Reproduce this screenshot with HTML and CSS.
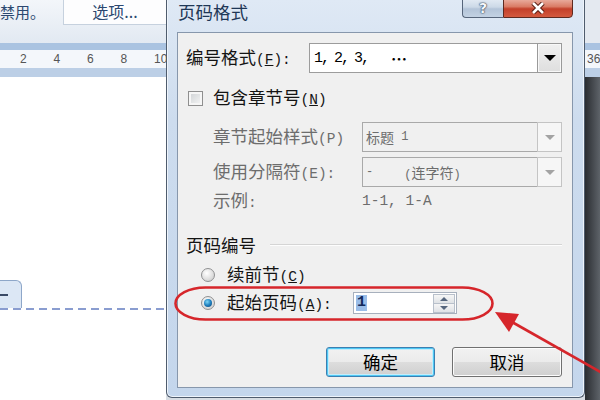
FILE: index.html
```html
<!DOCTYPE html>
<html lang="zh-CN">
<head>
<meta charset="utf-8">
<title>页码格式</title>
<link rel="stylesheet" href="styles.css">
</head>
<body>
<div class="screen">
  <div class="doc">
    <div class="ribbon">
      <span class="ribbon-note">禁用。</span>
      <span class="ribbon-tab">选项...</span>
    </div>
    <div class="ruler">
      <span>2</span><span>4</span><span>6</span><span>8</span><span>10</span>
    </div>
    <div class="page">
      <div class="hf-tab"><span class="hf-dash"></span></div>
      <div class="hf-line"></div>
    </div>
  </div>

  <div class="dialog">
    <div class="titlebar">
      <span class="title">页码格式</span>
      <div class="caption">
        <span class="cap-btn cap-help">?</span>
        <span class="cap-btn cap-close">
          <svg width="16" height="12" viewBox="0 0 16 12"><path d="M3 1 L13 11 M13 1 L3 11" stroke="#5a1d12" stroke-width="4.6"/><path d="M3 1 L13 11 M13 1 L3 11" stroke="#ffffff" stroke-width="2.6"/></svg>
        </span>
      </div>
    </div>

    <div class="client">
      <div class="row row-format">
        <span class="label label-format">编号格式<span class="a">(<u>F</u>):</span></span>
        <div class="combo">
          <span class="combo-text"><span class="num">1,</span><span class="num">2,</span><span class="num">3,</span><span class="ellipsis">…</span></span>
          <span class="combo-btn"><span class="tri"></span></span>
        </div>
      </div>

      <div class="row row-check">
        <span class="checkbox"></span>
        <span class="label">包含章节号<span class="a">(<u>N</u>)</span></span>
      </div>

      <div class="row row-sub row-sub1">
        <span class="label label-sub disabled">章节起始样式<span class="a">(P)</span></span>
        <div class="combo combo-disabled">
          <span class="combo-text">标题<span class="a-sm"> 1</span></span>
          <span class="combo-btn"><span class="tri"></span></span>
        </div>
      </div>

      <div class="row row-sub row-sub2">
        <span class="label label-sub disabled">使用分隔符<span class="a">(E):</span></span>
        <div class="combo combo-disabled">
          <span class="combo-text"><span class="a-sm">-</span><span class="sep-name"><span class="a-sm">(</span>连字符<span class="a-sm">)</span></span></span>
          <span class="combo-btn"><span class="tri"></span></span>
        </div>
      </div>

      <div class="row row-example">
        <span class="label label-sub disabled">示例<span class="a">:</span></span>
        <span class="example disabled">1-1, 1-A</span>
      </div>

      <div class="row group-head">
        <span class="label">页码编号</span>
        <span class="group-line"></span>
      </div>

      <div class="row row-radio radio1">
        <span class="radio"></span>
        <span class="label">续前节<span class="a">(<u>C</u>)</span></span>
      </div>

      <div class="row row-radio radio2">
        <span class="radio checked"><span class="radio-dot"></span></span>
        <span class="label label-start">起始页码<span class="a">(<u>A</u>):</span></span>
        <div class="spin">
          <span class="spin-val">1</span>
          <span class="spin-btns">
            <span class="spin-btn"><span class="tri-up"></span></span>
            <span class="spin-btn"><span class="tri-down"></span></span>
          </span>
        </div>
      </div>

      <div class="row buttons">
        <span class="btn btn-default">确定</span>
        <span class="btn">取消</span>
      </div>
    </div>
  </div>

  <div class="edge">
    <div class="edge-top"></div>
    <div class="edge-ruler">36</div>
    <div class="edge-shadow"></div>
  </div>
</div>

<svg class="annot" width="600" height="400" viewBox="0 0 600 400">
  <rect x="175.5" y="287.5" width="317" height="32" rx="30" ry="16" fill="none" stroke="#d6262b" stroke-width="2.6"/>
  <line x1="512" y1="322" x2="604" y2="374" stroke="#d6262b" stroke-width="2.6"/>
  <polygon points="495,312 519,314 509,332" fill="#d6262b"/>
</svg>
</body>
</html>
```

FILE: styles.css
```css
* { box-sizing: border-box; }
html, body { margin: 0; padding: 0; }
body {
  width: 600px;
  height: 400px;
  overflow: hidden;
  position: relative;
  font-family: "Noto Sans CJK SC", "Noto Sans", sans-serif;
  background: #d8dde3;
}
.screen { display: flex; align-items: flex-start; width: 600px; height: 400px; }

/* ---------- document behind the dialog ---------- */
.doc {
  width: 166px;
  height: 400px;
  flex: none;
  display: flex;
  flex-direction: column;
  background: #fff;
  overflow: hidden;
}
.ribbon {
  height: 43px;
  flex: none;
  display: flex;
  align-items: flex-start;
  background: linear-gradient(#f3f6fa, #e2e9f2);
}
.ribbon-note {
  width: 63px;
  flex: none;
  font-size: 15px;
  line-height: 24px;
  color: #2c4870;
  white-space: nowrap;
}
.ribbon-tab {
  flex: 1;
  height: 25px;
  background: #fdfdfe;
  border-left: 1px solid #c6d1de;
  border-bottom: 1px solid #c6d1de;
  font-size: 16px;
  line-height: 23px;
  color: #2c4870;
  text-align: center;
}
.ruler {
  height: 34px;
  flex: none;
  display: flex;
  align-items: center;
  padding-left: 20px;
  background: #f4f7fb;
  border-top: 7px solid #aac3e1;
  border-bottom: 9px solid #bccfe6;
}
.ruler span {
  width: 33.5px;
  flex: none;
  font-family: "Liberation Sans", sans-serif;
  font-size: 12px;
  color: #555;
}
.page { flex: 1; padding-top: 203px; }
.hf-tab {
  width: 22px;
  height: 28px;
  background: #dce7f5;
  border: 1px solid #8ea7c9;
  border-left: none;
  border-bottom: none;
  border-radius: 0 6px 0 0;
  display: flex;
  align-items: center;
}
.hf-dash { width: 8px; height: 2px; background: #3a4a66; }
.hf-line {
  height: 2px;
  background: repeating-linear-gradient(90deg, #8a9dd0 0 8px, transparent 8px 13px);
}

/* ---------- dialog ---------- */
.dialog {
  width: 419px;
  height: 398px;
  flex: none;
  display: flex;
  flex-direction: column;
  padding: 0 11px 9px 10px;
  border: 1px solid #4f5c6d;
  border-top: none;
  border-radius: 0 0 6px 6px;
  background: linear-gradient(180deg, #dfe9f5 0%, #cddcee 30%, #c4d6ec 100%);
  box-shadow: inset 1px 0 0 #eef4fb, inset -1px 0 0 #eef4fb, inset 0 -1px 0 #eef4fb;
}
.titlebar {
  height: 32px;
  flex: none;
  display: flex;
  align-items: flex-start;
}
.title {
  margin-left: 1px;
  font-size: 17.5px;
  line-height: 24px;
  color: #1e3756;
}
.caption {
  margin-left: auto;
  margin-top: -2px;
  display: flex;
  height: 20px;
}
.cap-btn {
  display: flex;
  align-items: center;
  justify-content: center;
  height: 20px;
  border: 1px solid #56657a;
}
.cap-help {
  width: 41px;
  border-right: none;
  border-radius: 0 0 0 4px;
  background: linear-gradient(#e3ebf4 0%, #ccd9e7 45%, #b3c4d8 55%, #c3d2e3 100%);
  font-family: "DejaVu Sans", sans-serif;
  font-weight: bold;
  font-size: 14px;
  color: #f4f7fb;
  text-shadow: 0 0 1px #3d4b5e, 0 0 1px #3d4b5e, 0 0 2px #3d4b5e;
}
.cap-close {
  width: 70px;
  border-color: #5e2a20;
  border-radius: 0 0 4px 0;
  background: linear-gradient(#eab0a2 0%, #da7c66 42%, #c3402a 55%, #d45a3f 100%);
}

.client {
  flex: none;
  background: #f0f0f0;
  border: 1px solid #8797ac;
  padding: 10px 10px 10px 8px;
  display: flex;
  flex-direction: column;
}
.row { display: flex; align-items: center; flex: none; }
.label {
  font-size: 17.5px;
  line-height: 20px;
  color: #141414;
  white-space: nowrap;
}
.disabled { color: #6d6d6d; }
.a { font-family: "Liberation Mono", monospace; font-size: 14.5px; }
.a-sm { font-family: "Liberation Mono", monospace; font-size: 12px; }

/* number format row */
.row-format { height: 30px; }
.label-format { width: 123px; flex: none; }
.combo {
  flex: 1;
  height: 100%;
  display: flex;
  background: #fff;
  border: 1px solid #9c9c9c;
}
.combo-text {
  flex: 1;
  display: flex;
  align-items: center;
  padding-left: 3px;
  font-size: 14px;
  color: #000;
  white-space: pre;
}
.num {
  flex: none;
  margin-right: 5px;
  font-family: "Liberation Mono", monospace;
  font-size: 15px;
  letter-spacing: -2px;
  padding-left: 1px;
}
.ellipsis { margin-left: 18px; font-size: 16px; font-weight: bold; }
.combo-btn {
  width: 25px;
  flex: none;
  margin: -1px -1px -1px 0;
  border: 1px solid #9a9a9a;
  background: linear-gradient(#f0f0f0, #dedede);
  box-shadow: inset 0 0 0 1px #f8f8f8;
  display: flex;
  align-items: center;
  justify-content: center;
}
.tri {
  width: 0;
  height: 0;
  border-left: 6px solid transparent;
  border-right: 6px solid transparent;
  border-top: 6px solid #000;
}

/* checkbox row */
.row-check { margin-top: 15px; height: 20px; padding-left: 2px; gap: 10px; }
.checkbox {
  width: 15px;
  height: 15px;
  flex: none;
  border: 1px solid #8f8f8f;
  background: linear-gradient(135deg, #cdd0d3, #f7f7f7);
  box-shadow: inset 0 0 0 2px #f6f6f6;
}

/* disabled sub rows */
.row-sub { padding-left: 27px; height: 30px; }
.row-sub1 { margin-top: 14px; }
.row-sub2 { margin-top: 5px; }
.label-sub { width: 149px; flex: none; }
.combo-disabled { background: #f0f0f0; border-color: #a9a9a9; }
.combo-disabled .combo-text { color: #6d6d6d; }
.combo-disabled .combo-btn {
  border-color: #c4c4c4;
  background: #f6f6f6;
  box-shadow: none;
}
.combo-disabled .tri { border-top-color: #a3a3a3; border-left-width: 5px; border-right-width: 5px; border-top-width: 5px; }
.sep-name { margin-left: 31px; }

.row-example { margin-top: 4px; height: 20px; padding-left: 27px; }
.example { font-family: "Liberation Mono", monospace; font-size: 14.5px; }

/* group header */
.group-head { margin-top: 24px; height: 20px; gap: 14px; }
.group-line {
  flex: 1;
  height: 2px;
  border-top: 1px solid #d5d5d5;
  border-bottom: 1px solid #fdfdfd;
}

/* radio rows */
.row-radio { padding-left: 15px; gap: 12px; }
.radio1 { margin-top: 10px; height: 20px; }
.radio2 { margin-top: 7px; height: 22px; }
.radio {
  width: 14px;
  height: 14px;
  flex: none;
  border-radius: 50%;
  border: 1px solid #8f9092;
  background: radial-gradient(circle at 40% 35%, #ffffff, #dadada 65%, #c6c6c6);
  display: flex;
  align-items: center;
  justify-content: center;
}
.radio-dot {
  width: 8px;
  height: 8px;
  border-radius: 50%;
  background: radial-gradient(circle at 40% 35%, #7fd6f6, #1f80bf 50%, #0b3f6e);
}
.label-start { width: 114px; flex: none; }
.spin {
  width: 104px;
  height: 22px;
  flex: none;
  display: flex;
  align-items: center;
  border: 1px solid #a7b0bd;
  background: #fff;
  padding: 0 1px 0 2px;
}
.spin-val {
  background: #9abde8;
  color: #12285a;
  font-family: "Liberation Mono", monospace;
  font-weight: bold;
  font-size: 15px;
  line-height: 16px;
  padding: 0 1px;
}
.spin-btns {
  margin-left: auto;
  width: 22px;
  height: 19px;
  display: flex;
  flex-direction: column;
}
.spin-btn {
  flex: 1;
  display: flex;
  align-items: center;
  justify-content: center;
  border: 1px solid #b8c0cb;
  background: linear-gradient(#f6f6f6, #dfe2e6);
}
.spin-btn + .spin-btn { border-top: none; }
.tri-up {
  width: 0; height: 0;
  border-left: 4px solid transparent;
  border-right: 4px solid transparent;
  border-bottom: 4px solid #55657d;
}
.tri-down {
  width: 0; height: 0;
  border-left: 4px solid transparent;
  border-right: 4px solid transparent;
  border-top: 4px solid #55657d;
}

/* buttons */
.buttons { margin-top: 33px; height: 30px; padding-left: 140px; gap: 17px; }
.btn {
  width: 110px;
  height: 30px;
  flex: none;
  border: 1px solid #707070;
  border-radius: 3px;
  background: linear-gradient(#f2f2f2 0%, #ebebeb 49%, #dddddd 50%, #cfcfcf 100%);
  box-shadow: inset 0 0 0 1px #fcfcfc;
  font-size: 17.5px;
  line-height: 27px;
  text-align: center;
  color: #000;
}
.btn-default {
  width: 109px;
  border-color: #3c7fb1;
  box-shadow: inset 0 0 0 1px #4fc9f5, inset 0 0 0 2px #c4ecfb;
}

/* ---------- right edge ---------- */
.edge {
  flex: 1;
  height: 400px;
  display: flex;
  flex-direction: column;
}
.edge-top { height: 43px; background: #e4e9f0; }
.edge-ruler {
  height: 34px;
  background: #f4f7fb;
  border-top: 7px solid #aac3e1;
  border-bottom: 9px solid #bccfe6;
  font-family: "Liberation Sans", sans-serif;
  font-size: 12px;
  line-height: 18px;
  color: #555;
  padding-left: 2px;
  white-space: nowrap;
  overflow: hidden;
}
.edge-shadow { flex: 1; background: linear-gradient(90deg, #2a2d31, #5e6369); }

/* ---------- annotation overlay ---------- */
.annot { position: absolute; left: 0; top: 0; pointer-events: none; }
```
